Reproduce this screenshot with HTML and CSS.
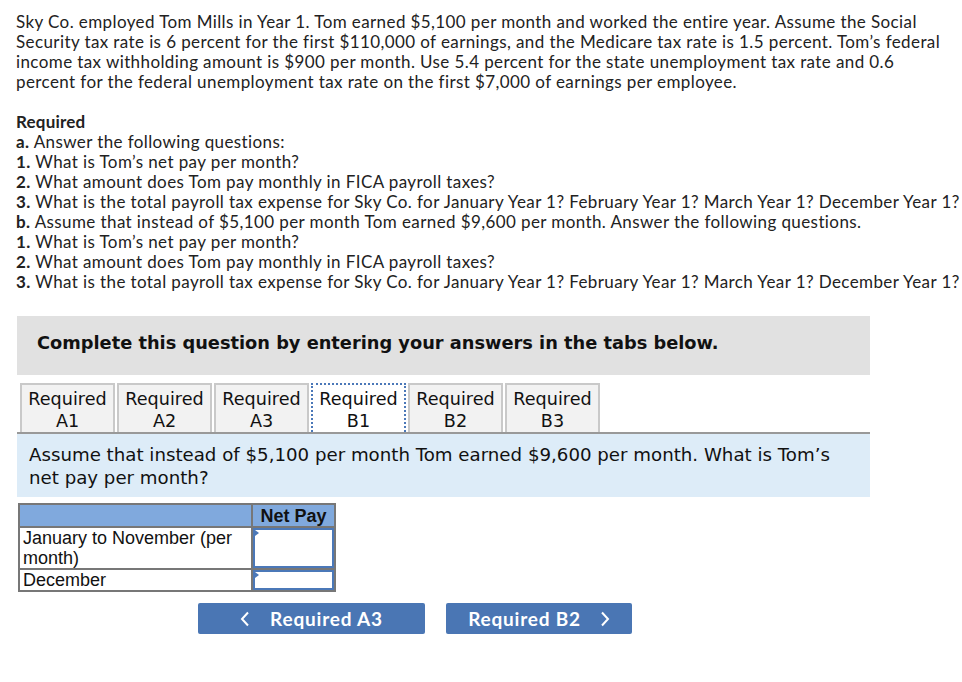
FILE: index.html
```html
<!DOCTYPE html>
<html>
<head>
<meta charset="utf-8">
<link rel="stylesheet" href="styles.css">
</head>
<body>
<div class="page">
  <p class="intro">Sky Co. employed Tom Mills in Year 1. Tom earned $5,100 per month and worked the entire year. Assume the Social<br>Security tax rate is 6 percent for the first $110,000 of earnings, and the Medicare tax rate is 1.5 percent. Tom’s federal<br>income tax withholding amount is $900 per month. Use 5.4 percent for the state unemployment tax rate and 0.6<br>percent for the federal unemployment tax rate on the first $7,000 of earnings per employee.</p>

  <div class="required">
    <div class="req-title">Required</div>
    <div class="line"><b>a.</b> Answer the following questions:</div>
    <div class="line"><b>1.</b> What is Tom’s net pay per month?</div>
    <div class="line"><b>2.</b> What amount does Tom pay monthly in FICA payroll taxes?</div>
    <div class="line"><b>3.</b> What is the total payroll tax expense for Sky Co. for January Year 1? February Year 1? March Year 1? December Year 1?</div>
    <div class="line"><b>b.</b> Assume that instead of $5,100 per month Tom earned $9,600 per month. Answer the following questions.</div>
    <div class="line"><b>1.</b> What is Tom’s net pay per month?</div>
    <div class="line"><b>2.</b> What amount does Tom pay monthly in FICA payroll taxes?</div>
    <div class="line"><b>3.</b> What is the total payroll tax expense for Sky Co. for January Year 1? February Year 1? March Year 1? December Year 1?</div>
  </div>

  <div class="panel">
    <div class="banner">Complete this question by entering your answers in the tabs below.</div>
    <div class="tabs">
      <div class="tab">Required<br>A1</div>
      <div class="tab">Required<br>A2</div>
      <div class="tab">Required<br>A3</div>
      <div class="tab active">Required<br>B1</div>
      <div class="tab">Required<br>B2</div>
      <div class="tab">Required<br>B3</div>
    </div>
    <div class="info">Assume that instead of $5,100 per month Tom earned $9,600 per month. What is Tom’s net pay per month?</div>

    <table class="grid">
      <tr>
        <th class="blank"></th>
        <th class="head">Net Pay</th>
      </tr>
      <tr>
        <td class="label">January to November (per month)</td>
        <td class="input tall"><span class="mark"></span></td>
      </tr>
      <tr>
        <td class="label">December</td>
        <td class="input"><span class="mark"></span></td>
      </tr>
    </table>

    <div class="nav">
      <button class="btn prev"><svg class="chev" width="10" height="16" viewBox="0 0 10 16"><path d="M8 1.5 L2 8 L8 14.5" fill="none" stroke="#fff" stroke-width="2"/></svg><span>Required A3</span></button>
      <button class="btn next"><span>Required B2</span><svg class="chev" width="10" height="16" viewBox="0 0 10 16"><path d="M2 1.5 L8 8 L2 14.5" fill="none" stroke="#fff" stroke-width="2"/></svg></button>
    </div>
  </div>
</div>
</body>
</html>
```

FILE: styles.css
```css
html, body {
  margin: 0;
  padding: 0;
  background: #fff;
}
.page {
  padding: 12px 0 0 16px;
  font-family: Lato, "Liberation Sans", sans-serif;
  font-size: 17px;
  letter-spacing: 0.4px;
  line-height: 20px;
  color: #222;
}
.intro {
  margin: 0;
  white-space: nowrap;
}
.required {
  margin-top: 20px;
}
.req-title {
  font-weight: bold;
  letter-spacing: 0.2px;
}
.line {
  white-space: nowrap;
}
.line b {
  font-weight: bold;
}
.panel {
  margin-top: 24px;
  width: 853px;
  margin-left: 1px;
  letter-spacing: 0;
}
.banner {
  background: #e1e1e1;
  height: 59px;
  box-sizing: border-box;
  padding-left: 20px;
  padding-bottom: 6px;
  display: flex;
  align-items: center;
  font-family: "DejaVu Sans", Verdana, sans-serif;
  font-weight: bold;
  font-size: 17.8px;
  color: #111;
}
.tabs {
  display: flex;
  gap: 2px;
  margin-top: 8px;
  padding-left: 3px;
  border-bottom: 2px solid #999;
}
.tab {
  width: 91px;
  height: 44px;
  border: 2px solid #c9c9c9;
  border-bottom: none;
  background: #f2f2f2;
  text-align: center;
  font-family: "DejaVu Sans", Verdana, sans-serif;
  font-size: 17.6px;
  line-height: 22px;
  color: #111;
  padding-top: 3px;
  white-space: nowrap;
}
.tab.active {
  background: #fff;
  border: 2px dotted #4b78b8;
  border-bottom: none;
}
.info {
  background: #ddecf8;
  padding: 9px 20px 8px 12px;
  font-family: "DejaVu Sans", Verdana, sans-serif;
  font-size: 18.2px;
  line-height: 23px;
  color: #111;
}
.grid {
  margin-top: 6px;
  margin-left: 1px;
  border-collapse: collapse;
  font-family: "Liberation Sans", Arial, sans-serif;
  font-size: 18px;
  line-height: 20px;
  color: #111;
}
.grid th, .grid td {
  border: 2px solid #777;
  padding: 0;
}
.grid th {
  background: #80a9dd;
  height: 21px;
  line-height: 20px;
}
.blank {
  width: 231px;
}
.head {
  width: 81px;
  font-weight: bold;
  font-size: 18px;
  text-align: center;
}
.label {
  padding: 0 2px 0 3px !important;
  vertical-align: top;
}
.input {
  position: relative;
  background: #fff;
  box-shadow: inset 0 0 0 2px #4b78b8;
  height: 20px;
}
.input.tall {
  height: 38px;
}
.mark {
  position: absolute;
  left: 2px;
  top: 2px;
  width: 0;
  height: 0;
  border-top: 3px solid transparent;
  border-bottom: 3px solid transparent;
  border-left: 4px solid #4b78b8;
}
.nav {
  display: flex;
  gap: 21px;
  margin-top: 11px;
  padding-left: 181px;
}
.btn {
  height: 31px;
  border: none;
  border-radius: 2px;
  background: #4a76b4;
  color: #fff;
  font-family: Lato, "Liberation Sans", sans-serif;
  font-weight: bold;
  font-size: 19px;
  letter-spacing: 0.8px;
  display: flex;
  align-items: center;
  justify-content: center;
  padding: 0;
}
.btn.prev {
  width: 227px;
  gap: 20px;
}
.btn.next {
  width: 186px;
  gap: 19px;
}
.chev {
  display: block;
}
```
